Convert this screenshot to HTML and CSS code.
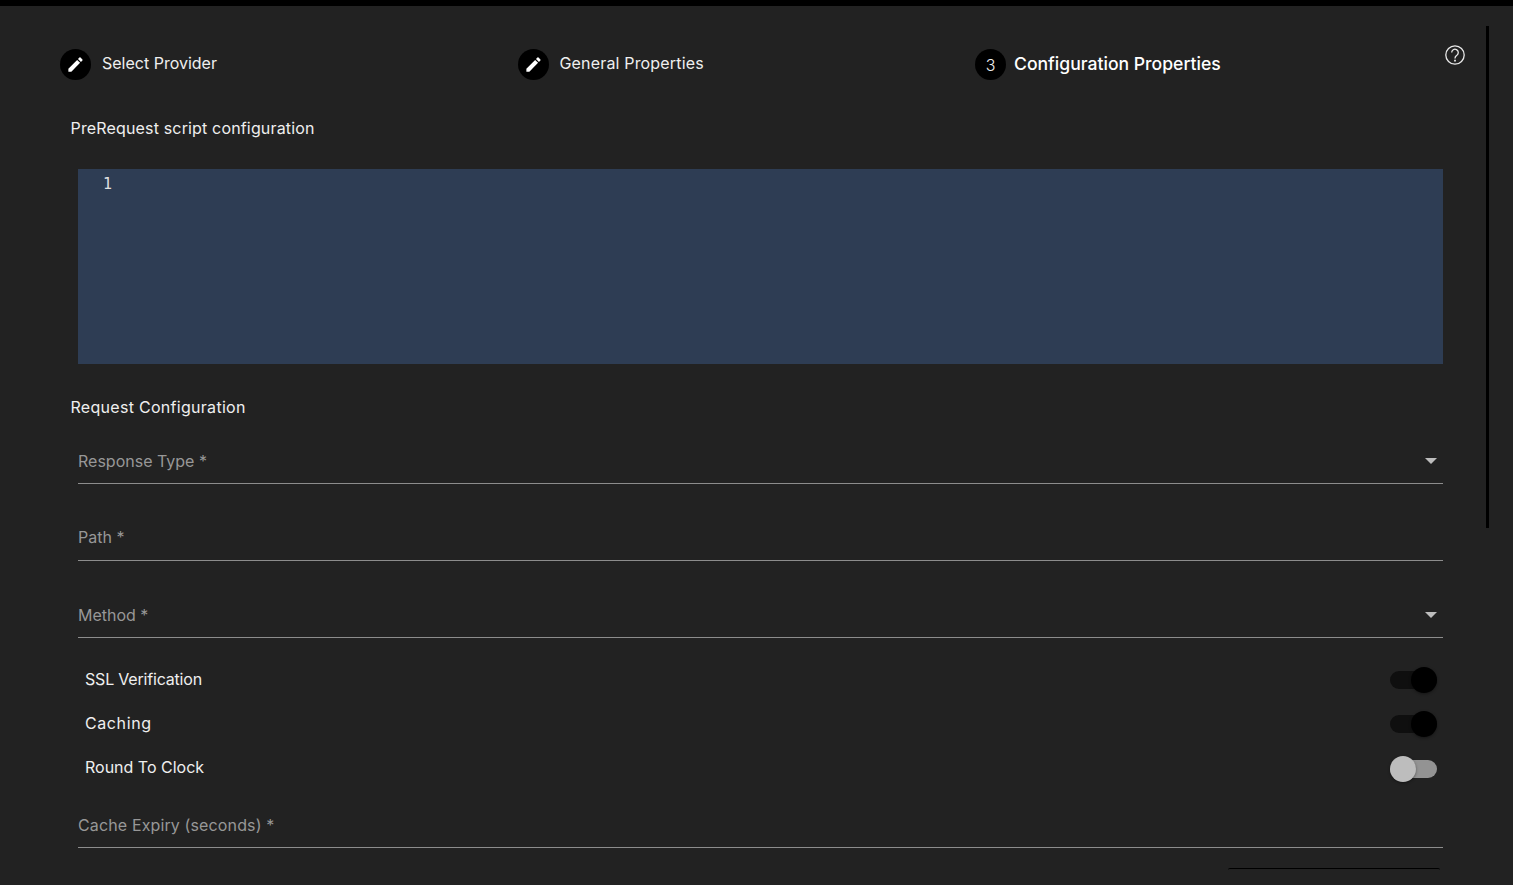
FILE: index.html
```html
<!DOCTYPE html>
<html lang="en">
<head>
<meta charset="utf-8">
<title>Configuration Properties</title>
<link rel="stylesheet" href="styles.css">
</head>
<body>
<div class="topbar"></div>
<main class="page">
  <header class="stepper">
    <div class="step">
      <span class="step-circle"><svg class="edit-icon" viewBox="0 0 24 24"><path d="M3 17.25V21h3.75L17.81 9.94l-3.75-3.75L3 17.25zM20.71 7.04a1 1 0 0 0 0-1.41l-2.34-2.34a1 1 0 0 0-1.41 0l-1.83 1.83 3.75 3.75 1.83-1.83z"/></svg></span>
      <span class="step-label">Select Provider</span>
    </div>
    <div class="step">
      <span class="step-circle"><svg class="edit-icon" viewBox="0 0 24 24"><path d="M3 17.25V21h3.75L17.81 9.94l-3.75-3.75L3 17.25zM20.71 7.04a1 1 0 0 0 0-1.41l-2.34-2.34a1 1 0 0 0-1.41 0l-1.83 1.83 3.75 3.75 1.83-1.83z"/></svg></span>
      <span class="step-label label-general">General Properties</span>
    </div>
    <div class="step step-active">
      <span class="step-circle">3</span>
      <span class="step-label">Configuration Properties</span>
    </div>
  </header>
  <svg class="help-icon" viewBox="0 0 24 24"><circle cx="12" cy="12" r="9.2"/><path d="M8.7 9.6a3.3 3.3 0 1 1 5.2 2.6c-1.2.8-1.9 1.5-1.9 3v.3"/><path class="help-dot" d="M11.1 16.7h1.8v1.8h-1.8z"/></svg>
  <div class="scroll-thumb"></div>

  <h2 class="section-title title-script">PreRequest script configuration</h2>
  <div class="editor"><span class="line-number">1</span></div>

  <h2 class="section-title title-request">Request Configuration</h2>
  <div class="fields">
    <div class="field field-first"><span class="field-label">Response Type *</span><span class="caret"></span></div>
    <div class="field field-path"><span class="field-label">Path *</span></div>
    <div class="field"><span class="field-label">Method *</span><span class="caret"></span></div>
  </div>
  <div class="toggles">
    <div class="toggle-row"><span class="toggle-label label-ssl">SSL Verification</span><span class="switch switch-on"><span class="switch-thumb"></span></span></div>
    <div class="toggle-row"><span class="toggle-label label-caching">Caching</span><span class="switch switch-on"><span class="switch-thumb"></span></span></div>
    <div class="toggle-row"><span class="toggle-label">Round To Clock</span><span class="switch switch-off"><span class="switch-thumb"></span></span></div>
  </div>
  <div class="fields">
    <div class="field field-last"><span class="field-label label-cache">Cache Expiry (seconds) *</span></div>
  </div>
  <div class="bottom-row"><div class="bottom-edge"></div></div>
</main>
</body>
</html>
```
FILE: styles.css
```css
* { box-sizing: border-box; }
html, body { margin: 0; height: 885px; overflow: hidden; }
body {
  background: #222222;
  color: #efefef;
  font-family: Inter, "Noto Sans", "Liberation Sans", sans-serif;
  font-size: 16px;
}
.topbar { height: 6px; background: #000; }
.page { position: relative; padding: 43px 70px 0 78px; }
.stepper { display: flex; margin-left: -18px; height: 31px; }
.step { width: 457.5px; display: flex; align-items: center; gap: 11px; }
.step-circle {
  width: 31px; height: 31px; border-radius: 50%;
  background: #000; color: #efefef;
  display: flex; align-items: center; justify-content: center;
  font-size: 16px; font-weight: 300; flex: none;
}
.edit-icon { width: 19px; height: 19px; fill: #fff; }
.step-label { font-size: 16px; line-height: 28px; margin-top: -3px; }
.label-general { letter-spacing: 0.17px; }
.step-active { gap: 8px; }
.step-active .step-label { font-size: 17.6px; font-weight: 500; color: #fff; margin-top: -2px; }
.help-icon { position: absolute; left: 1443px; top: 37px; width: 24px; height: 24px; fill: none; stroke: #e8e8e8; stroke-width: 1.3; }
.help-icon .help-dot { fill: #e8e8e8; stroke: none; }
.scroll-thumb { position: absolute; left: 1486px; top: 20px; width: 3px; height: 502px; background: #000; }
.section-title { margin: 0 0 0 -7.5px; font-size: 16px; font-weight: 400; line-height: 24px; }
.title-script { margin-top: 36px; letter-spacing: 0.16px; }
.editor { margin-top: 29px; height: 195px; background: #2e3d54; padding: 4px 0 0 25px; }
.line-number { font-family: "DejaVu Sans Mono", "Liberation Mono", monospace; font-size: 15px; line-height: 20px; color: #e0e0e0; }
.title-request { margin-top: 31px; letter-spacing: 0.29px; }
.fields { display: flex; flex-direction: column; }
.field {
  position: relative; height: 44px; margin-top: 33px; padding-bottom: 2px;
  border-bottom: 1px solid #8d8d8d;
  display: flex; align-items: center; justify-content: space-between;
}
.field-first { margin-top: 21px; }
.field-path { padding-bottom: 4px; }
.field-label { color: #979797; font-size: 16px; }
.label-cache { letter-spacing: 0.13px; }
.toggle-label { padding-bottom: 2px; }
.label-ssl { letter-spacing: -0.19px; }
.label-caching { letter-spacing: 0.6px; }
.caret {
  width: 0; height: 0; margin: 1px 6px 0 0;
  border-left: 6.5px solid transparent; border-right: 6.5px solid transparent; border-top: 6.5px solid #bdbdbd;
}
.toggles { padding: 20px 6px 0 7px; display: flex; flex-direction: column; }
.toggle-row { height: 44px; display: flex; align-items: center; justify-content: space-between; font-size: 16px; }
.switch { position: relative; width: 47px; height: 18px; border-radius: 10px; background: #939393; }
.switch-thumb {
  position: absolute; left: 0; top: -4px; width: 26px; height: 26px; border-radius: 50%;
  background: #bdbdbd; box-shadow: 0 1px 3px rgba(0,0,0,.4);
}
.switch-on { background: #0f0f0f; }
.switch-on .switch-thumb { left: 21px; background: #000; }
.switch-off { margin-top: 2px; }
.field-last { margin-top: 14px; }
.bottom-row { display: flex; justify-content: flex-end; padding: 20px 3px 0 0; }
.bottom-edge { width: 212px; height: 10px; border-top: 1px solid #000; border-radius: 2px 2px 0 0; }
```
